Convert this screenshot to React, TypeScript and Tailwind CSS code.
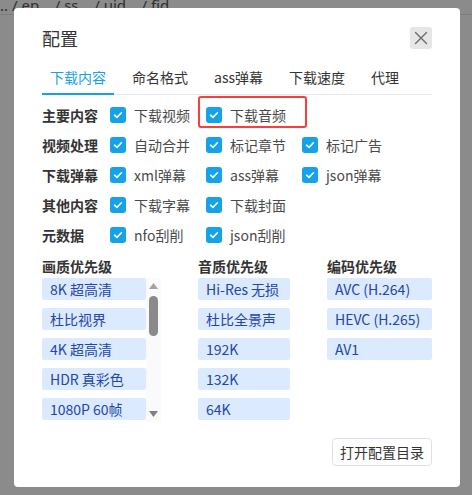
import { ReactNode } from "react";

const rows: { label: string; items: string[] }[] = [
  { label: "主要内容", items: ["下载视频", "下载音频"] },
  { label: "视频处理", items: ["自动合并", "标记章节", "标记广告"] },
  { label: "下载弹幕", items: ["xml弹幕", "ass弹幕", "json弹幕"] },
  { label: "其他内容", items: ["下载字幕", "下载封面"] },
  { label: "元数据", items: ["nfo刮削", "json刮削"] },
];

const tabs = ["下载内容", "命名格式", "ass弹幕", "下载速度", "代理"];

const quality = ["8K 超高清", "杜比视界", "4K 超高清", "HDR 真彩色", "1080P 60帧"];
const audio = ["Hi-Res 无损", "杜比全景声", "192K", "132K", "64K"];
const codec = ["AVC (H.264)", "HEVC (H.265)", "AV1"];

function Checkbox() {
  return (
    <span className="w-4 h-4 rounded-[3px] bg-[#16a2e6] flex items-center justify-center shrink-0">
      <svg width="12" height="12" viewBox="0 0 12 12" fill="none">
        <path d="M2.6 6.2 L5 8.4 L9.4 3.8" stroke="white" strokeWidth="1.6" strokeLinecap="round" strokeLinejoin="round" />
      </svg>
    </span>
  );
}

function CheckItem({ text, highlight }: { text: string; highlight?: boolean }) {
  return (
    <div className="relative w-[96px] flex items-center gap-2">
      <Checkbox />
      <span className="text-[14px] leading-[20px] text-[#4a4a4a] whitespace-nowrap">{text}</span>
      {highlight && (
        <div className="absolute -left-[8px] -top-[9px] w-[109px] h-[32px] border-2 border-[#ff3b3b] rounded-[3px]" />
      )}
    </div>
  );
}

function PrioItem({ children }: { children: ReactNode }) {
  return (
    <div className="h-[22px] shrink-0 rounded-[2px] bg-[#dbeafe] pl-2 flex items-center text-[14px] leading-[20px] text-[#2446a8] whitespace-nowrap">
      {children}
    </div>
  );
}

function Column({ title, children }: { title: string; children: ReactNode }) {
  return (
    <div className="flex flex-col">
      <div className="text-[14px] leading-[20px] font-bold text-[#333] mb-[2px]">{title}</div>
      {children}
    </div>
  );
}

export default function App() {
  return (
    <div className="relative w-[472px] h-[495px] overflow-hidden bg-[#8b8b8b] font-['Noto_Sans_CJK_SC',sans-serif]">
      <div className="h-[19px] border-b border-[#7c7c7c] flex items-end text-[15px] leading-[18px] text-[#2e2e2e] whitespace-pre font-['Noto_Sans',sans-serif] -mt-[4px]">
        {".. / ep    / ss    / uid    / fid"}
      </div>

      <div className="absolute left-[14px] top-[8px] w-[446px] h-[479px] bg-white rounded-[4px] px-7 pt-[18px]">
        <div className="flex items-center justify-between">
          <h1 className="text-[18px] leading-[24px] text-[#333]">配置</h1>
          <button className="w-[22px] h-[22px] rounded-[3px] bg-[#e6e6e6] flex items-center justify-center">
            <svg width="14" height="14" viewBox="0 0 14 14" fill="none">
              <path d="M1.5 1.5 L12.5 12.5 M12.5 1.5 L1.5 12.5" stroke="#6b6b6b" strokeWidth="1.4" strokeLinecap="round" />
            </svg>
          </button>
        </div>

        <div className="mt-[17px] flex gap-[10px] border-b border-[#e6e8ee]">
          {tabs.map((t, i) => (
            <div
              key={t}
              className={
                i === 0
                  ? "px-2 pb-[6px] -mb-px border-b-2 border-[#16a2e6] text-[#16a2e6] text-[14px] leading-[20px]"
                  : "px-2 pb-[6px] -mb-px border-b-2 border-transparent text-[#333] text-[14px] leading-[20px]"
              }
            >
              {t}
            </div>
          ))}
        </div>

        <div className="mt-[5px] flex flex-col">
          {rows.map((r, ri) => (
            <div key={r.label} className="h-[30px] flex items-center">
              <div className="w-[68px] text-[14px] leading-[20px] font-bold text-[#333]">{r.label}</div>
              {r.items.map((it, ii) => (
                <CheckItem key={it} text={it} highlight={ri === 0 && ii === 1} />
              ))}
            </div>
          ))}
        </div>

        <div className="mt-[6px] flex gap-[37px]">
          <Column title="画质优先级">
            <div className="flex w-[119px] h-[144px]">
              <div className="w-[104px] flex flex-col gap-2">
                {quality.map((q) => (
                  <PrioItem key={q}>{q}</PrioItem>
                ))}
              </div>
              <div className="w-[15px] bg-[#fafafa] flex flex-col items-center">
                <svg className="mt-[5px]" width="9" height="6" viewBox="0 0 9 6">
                  <path d="M4.5 0 L9 6 L0 6 Z" fill="#a3a3a3" />
                </svg>
                <div className="mt-[7px] w-[9px] h-[40px] rounded-full bg-[#8a8a8a]" />
                <div className="flex-1" />
                <svg className="mb-[5px]" width="9" height="6" viewBox="0 0 9 6">
                  <path d="M0 0 L9 0 L4.5 6 Z" fill="#808080" />
                </svg>
              </div>
            </div>
          </Column>
          <Column title="音质优先级">
            <div className="w-[92px] flex flex-col gap-2">
              {audio.map((a) => (
                <PrioItem key={a}>{a}</PrioItem>
              ))}
            </div>
          </Column>
          <Column title="编码优先级">
            <div className="w-[105px] flex flex-col gap-2">
              {codec.map((c) => (
                <PrioItem key={c}>{c}</PrioItem>
              ))}
            </div>
          </Column>
        </div>

        <div className="mt-[16px] flex justify-end">
          <button className="h-[28px] w-[100px] rounded-[4px] border border-[#dcdfe6] bg-white text-[14px] leading-[20px] text-[#333]">
            打开配置目录
          </button>
        </div>
      </div>
    </div>
  );
}
